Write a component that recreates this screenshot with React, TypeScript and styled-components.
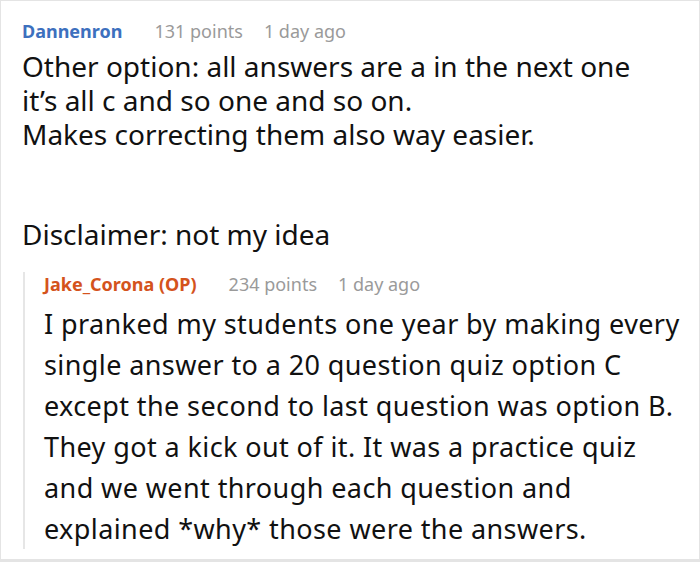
import { FC } from 'react';
import styled, { createGlobalStyle } from 'styled-components';

const GlobalStyle = createGlobalStyle`
	html, body {
		margin: 0;
		padding: 0;
		background: #ffffff;
	}
	body {
		font-family: 'Noto Sans', 'Open Sans', sans-serif;
	}
`;

type CommentMeta = {
	author: string;
	points: number;
	age: string;
	isOp?: boolean;
};

const Frame = styled.div`
	box-sizing: border-box;
	width: 700px;
	height: 562px;
	overflow: hidden;
	border: 1px solid #e4e4e4;
	border-bottom-width: 3px;
	padding: 18px 0 0 21px;
`;

const Header = styled.div`
	display: flex;
	align-items: baseline;
	font-size: 18px;
	line-height: 24px;
	white-space: nowrap;
`;

const Author = styled.span<{ $op?: boolean }>`
	font-weight: 700;
	color: ${(props) => (props.$op ? '#d4531c' : '#3d70be')};
	margin-right: 32px;
`;

const Meta = styled.span`
	color: #9a9a9a;
	margin-right: 21px;
`;

const Body = styled.div<{ $lh: number; $size: number; $track?: number }>`
	color: #111111;
	font-size: ${(props) => props.$size}px;
	letter-spacing: ${(props) => props.$track ?? 0}px;
	line-height: ${(props) => props.$lh}px;
	white-space: nowrap;
	p {
		margin: 0;
	}
	p + p {
		margin-top: ${(props) => props.$lh * 2 - 2}px;
	}
`;

const TopBody = styled(Body)`
	margin-top: 6px;
`;

const Reply = styled.div`
	margin-top: 21px;
	margin-left: 1px;
	border-left: 2px solid #e6e6e6;
	padding-left: 19px;
`;

const ReplyBody = styled(Body)`
	margin-top: 7px;
	margin-bottom: -6px;
`;

const CommentHeader: FC<CommentMeta> = ({ author, points, age, isOp }) => (
	<Header>
		<Author $op={isOp}>
			{author}
			{isOp ? ' (OP)' : ''}
		</Author>
		<Meta>{points} points</Meta>
		<Meta>{age}</Meta>
	</Header>
);

const App: FC = () => (
	<>
		<GlobalStyle />
		<Frame>
			<CommentHeader author="Dannenron" points={131} age="1 day ago" />
			<TopBody $lh={34} $size={28}>
				<p>
					Other option: all answers are a in the next one
					<br />
					it’s all c and so one and so on.
					<br />
					Makes correcting them also way easier.
				</p>
				<p>Disclaimer: not my idea</p>
			</TopBody>
			<Reply>
				<CommentHeader author="Jake_Corona" points={234} age="1 day ago" isOp />
				<ReplyBody $lh={41} $size={27} $track={0.4}>
					<p>
						I pranked my students one year by making every
						<br />
						single answer to a 20 question quiz option C
						<br />
						except the second to last question was option B.
						<br />
						They got a kick out of it. It was a practice quiz
						<br />
						and we went through each question and
						<br />
						explained *why* those were the answers.
					</p>
				</ReplyBody>
			</Reply>
		</Frame>
	</>
);

export default App;
